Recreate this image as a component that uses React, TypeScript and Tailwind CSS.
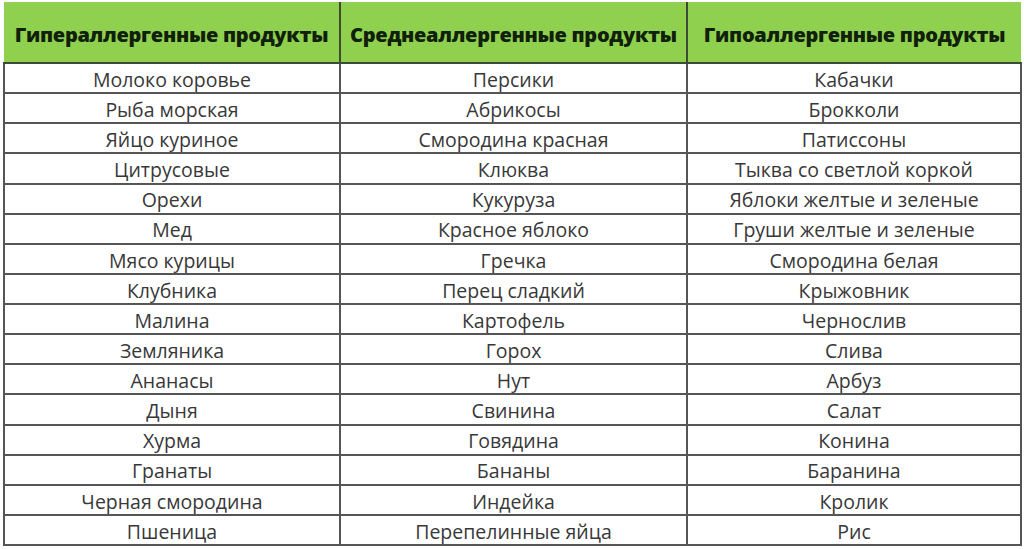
const rows: [string, string, string][] = [
  ["Молоко коровье", "Персики", "Кабачки"],
  ["Рыба морская", "Абрикосы", "Брокколи"],
  ["Яйцо куриное", "Смородина красная", "Патиссоны"],
  ["Цитрусовые", "Клюква", "Тыква со светлой коркой"],
  ["Орехи", "Кукуруза", "Яблоки желтые и зеленые"],
  ["Мед", "Красное яблоко", "Груши желтые и зеленые"],
  ["Мясо курицы", "Гречка", "Смородина белая"],
  ["Клубника", "Перец сладкий", "Крыжовник"],
  ["Малина", "Картофель", "Чернослив"],
  ["Земляника", "Горох", "Слива"],
  ["Ананасы", "Нут", "Арбуз"],
  ["Дыня", "Свинина", "Салат"],
  ["Хурма", "Говядина", "Конина"],
  ["Гранаты", "Бананы", "Баранина"],
  ["Черная смородина", "Индейка", "Кролик"],
  ["Пшеница", "Перепелинные яйца", "Рис"],
]

const headers = ["Гипераллергенные продукты", "Среднеаллергенные продукты", "Гипоаллергенные продукты"]

export default function App() {
  return (
    <div className="w-[1024px] h-[549px] bg-white overflow-hidden font-['Open_Sans',sans-serif]">
      <table className="ml-[3px] mt-[2px] w-[1017px] h-[544px] border-collapse table-fixed">
        <colgroup>
          <col className="w-[336px]" />
          <col className="w-[347px]" />
          <col className="w-[334px]" />
        </colgroup>
        <thead>
          <tr className="h-[61px] bg-[#8fd04f]">
            {headers.map((h, i) => (
              <th
                key={h}
                className={
                  "pt-[5px] text-center text-[20px] font-extrabold text-[#10200a] tracking-[-0.3px] border-b-2 border-b-[#3d4a35] " +
                  (i < 2 ? "border-r-2 border-r-[#3d4a35]" : "")
                }
              >
                {h}
              </th>
            ))}
          </tr>
        </thead>
        <tbody>
          {rows.map((r, ri) => (
            <tr key={ri} className="h-[30px]">
              {r.map((c, ci) => (
                <td
                  key={ci}
                  className="p-0 pt-[3px] text-center text-[19.5px] leading-none text-[#383838] border-2 border-[#555555]"
                >
                  {c}
                </td>
              ))}
            </tr>
          ))}
        </tbody>
      </table>
    </div>
  )
}
